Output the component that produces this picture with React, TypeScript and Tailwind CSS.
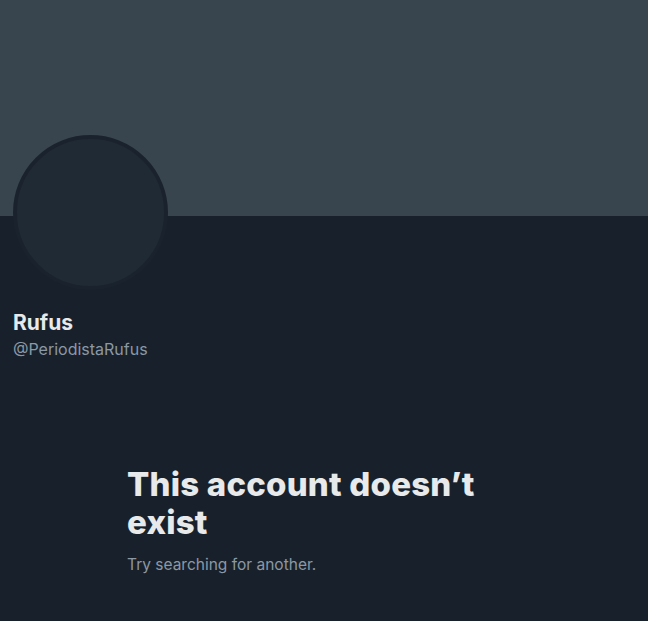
const App = () => {
  return (
    <div className="min-h-[621px] w-full bg-[#18212b] font-['Inter',sans-serif]">
      <div className="h-[216px] bg-[#38444e]" />
      <div className="px-[13px]">
        <div className="-mt-[81px] h-[155px] w-[155px] rounded-full border-[4px] border-[#1a232d] bg-[#202a35]" />
        <div className="mt-[21px] flex flex-col">
          <span className="text-[21px] font-bold leading-[24px] text-[#e7e9ea]">
            Rufus
          </span>
          <span className="mt-[4px] text-[16px] leading-[20px] text-[#8b98a5]">
            @PeriodistaRufus
          </span>
        </div>
      </div>
      <div className="mx-auto mt-[106px] w-[394px]">
        <h1 className="text-[33px] font-extrabold leading-[38px] tracking-[0.2px] text-[#e7e9ea]">
          This account doesn’t exist
        </h1>
        <p className="mt-[14px] text-[15.5px] leading-[20px] text-[#8b98a5]">
          Try searching for another.
        </p>
      </div>
    </div>
  );
};

export default App;
